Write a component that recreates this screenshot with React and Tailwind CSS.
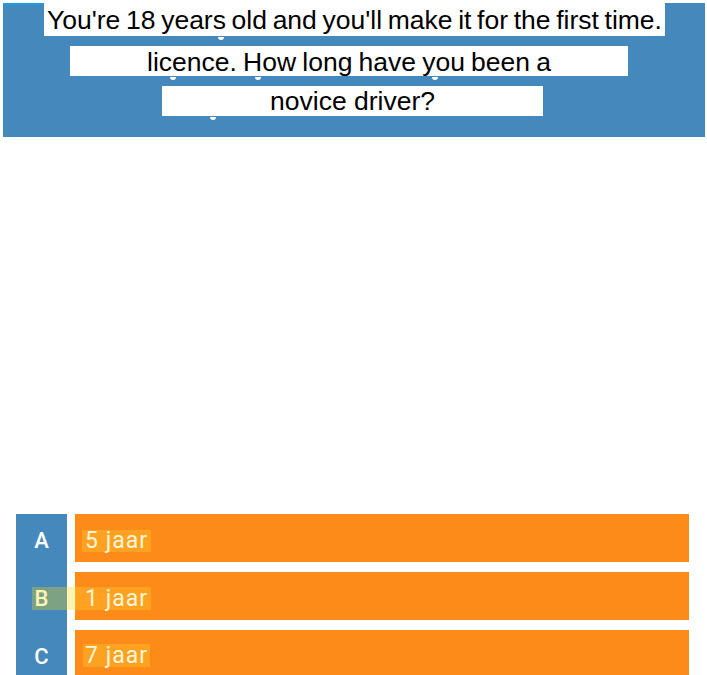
export default function App() {
  const blobs = [
    { l: 218, t: 34 },
    { l: 170, t: 74 },
    { l: 255, t: 74 },
    { l: 432, t: 74 },
    { l: 210, t: 114 },
  ];
  return (
    <div className="w-[707px] h-[675px] bg-white overflow-hidden relative">
      <div className="ml-[3px] mr-[2px] mt-[3px] h-[134px] bg-[#4588bc] relative flex flex-col gap-[10px] items-start" style={{ fontFamily: '"Liberation Sans", Arial, sans-serif' }}>
        <div className="absolute left-0 top-0 w-[40px] h-[2px] bg-[#1a9de3]" />
        {blobs.map((b, i) => (
          <span key={i} className="absolute w-[6px] h-[3px] bg-white rounded-b-full" style={{ left: b.l - 3, top: b.t }} />
        ))}
        <div className="ml-[41px] w-[621px] h-[33px] bg-white text-black text-[26.5px] leading-[34px] text-center whitespace-nowrap [word-spacing:-1.7px]">
          You're 18 years old and you'll make it for the first time.
        </div>
        <div className="ml-[67px] w-[558px] h-[30px] bg-white text-black text-[26.5px] leading-[33px] text-center whitespace-nowrap [word-spacing:-1.2px]">
          licence. How long have you been a
        </div>
        <div className="ml-[159px] w-[381px] h-[30px] bg-white text-black text-[26.5px] leading-[31px] text-center whitespace-nowrap">
          novice driver?
        </div>
      </div>

      <div className="mt-[377px] ml-[16px] flex gap-[8px] relative" style={{ fontFamily: 'Roboto, "Noto Sans", sans-serif' }}>
        <div className="absolute left-[16px] top-[73px] w-[44px] h-[23px] bg-[#ffdc00]/30 z-10" />
        <div className="w-[51px] bg-[#4588bc] flex flex-col gap-[10px]">
          {['A', 'B', 'C'].map((l) => (
            <div key={l} className="h-[48px] pt-[5px] flex items-center justify-center text-white text-[22px] font-medium">
              {l}
            </div>
          ))}
        </div>
        <div className="w-[614px] flex flex-col gap-[10px]">
          <div className="h-[48px] bg-[#fd8b1a] flex items-center pl-[7px] pt-[6px]">
            <span className="bg-[#ffa121] px-[3px] h-[22px] leading-[22px] text-[23px] tracking-[1px] text-[#fff6da]">5 jaar</span>
          </div>
          <div className="h-[48px] bg-[#fd8b1a] flex items-center pl-0 pt-[5px]">
            <span className="bg-[#ffa121] pl-[10px] pr-[3px] h-[23px] leading-[23px] text-[23px] tracking-[1px] text-[#fff6da]">1 jaar</span>
          </div>
          <div className="h-[48px] bg-[#fd8b1a] flex items-center pl-[8px] pt-[3px]">
            <span className="bg-[#ffa121] px-[2px] h-[23px] leading-[23px] text-[23px] tracking-[1px] text-[#fff6da]">7 jaar</span>
          </div>
        </div>
      </div>
    </div>
  );
}
